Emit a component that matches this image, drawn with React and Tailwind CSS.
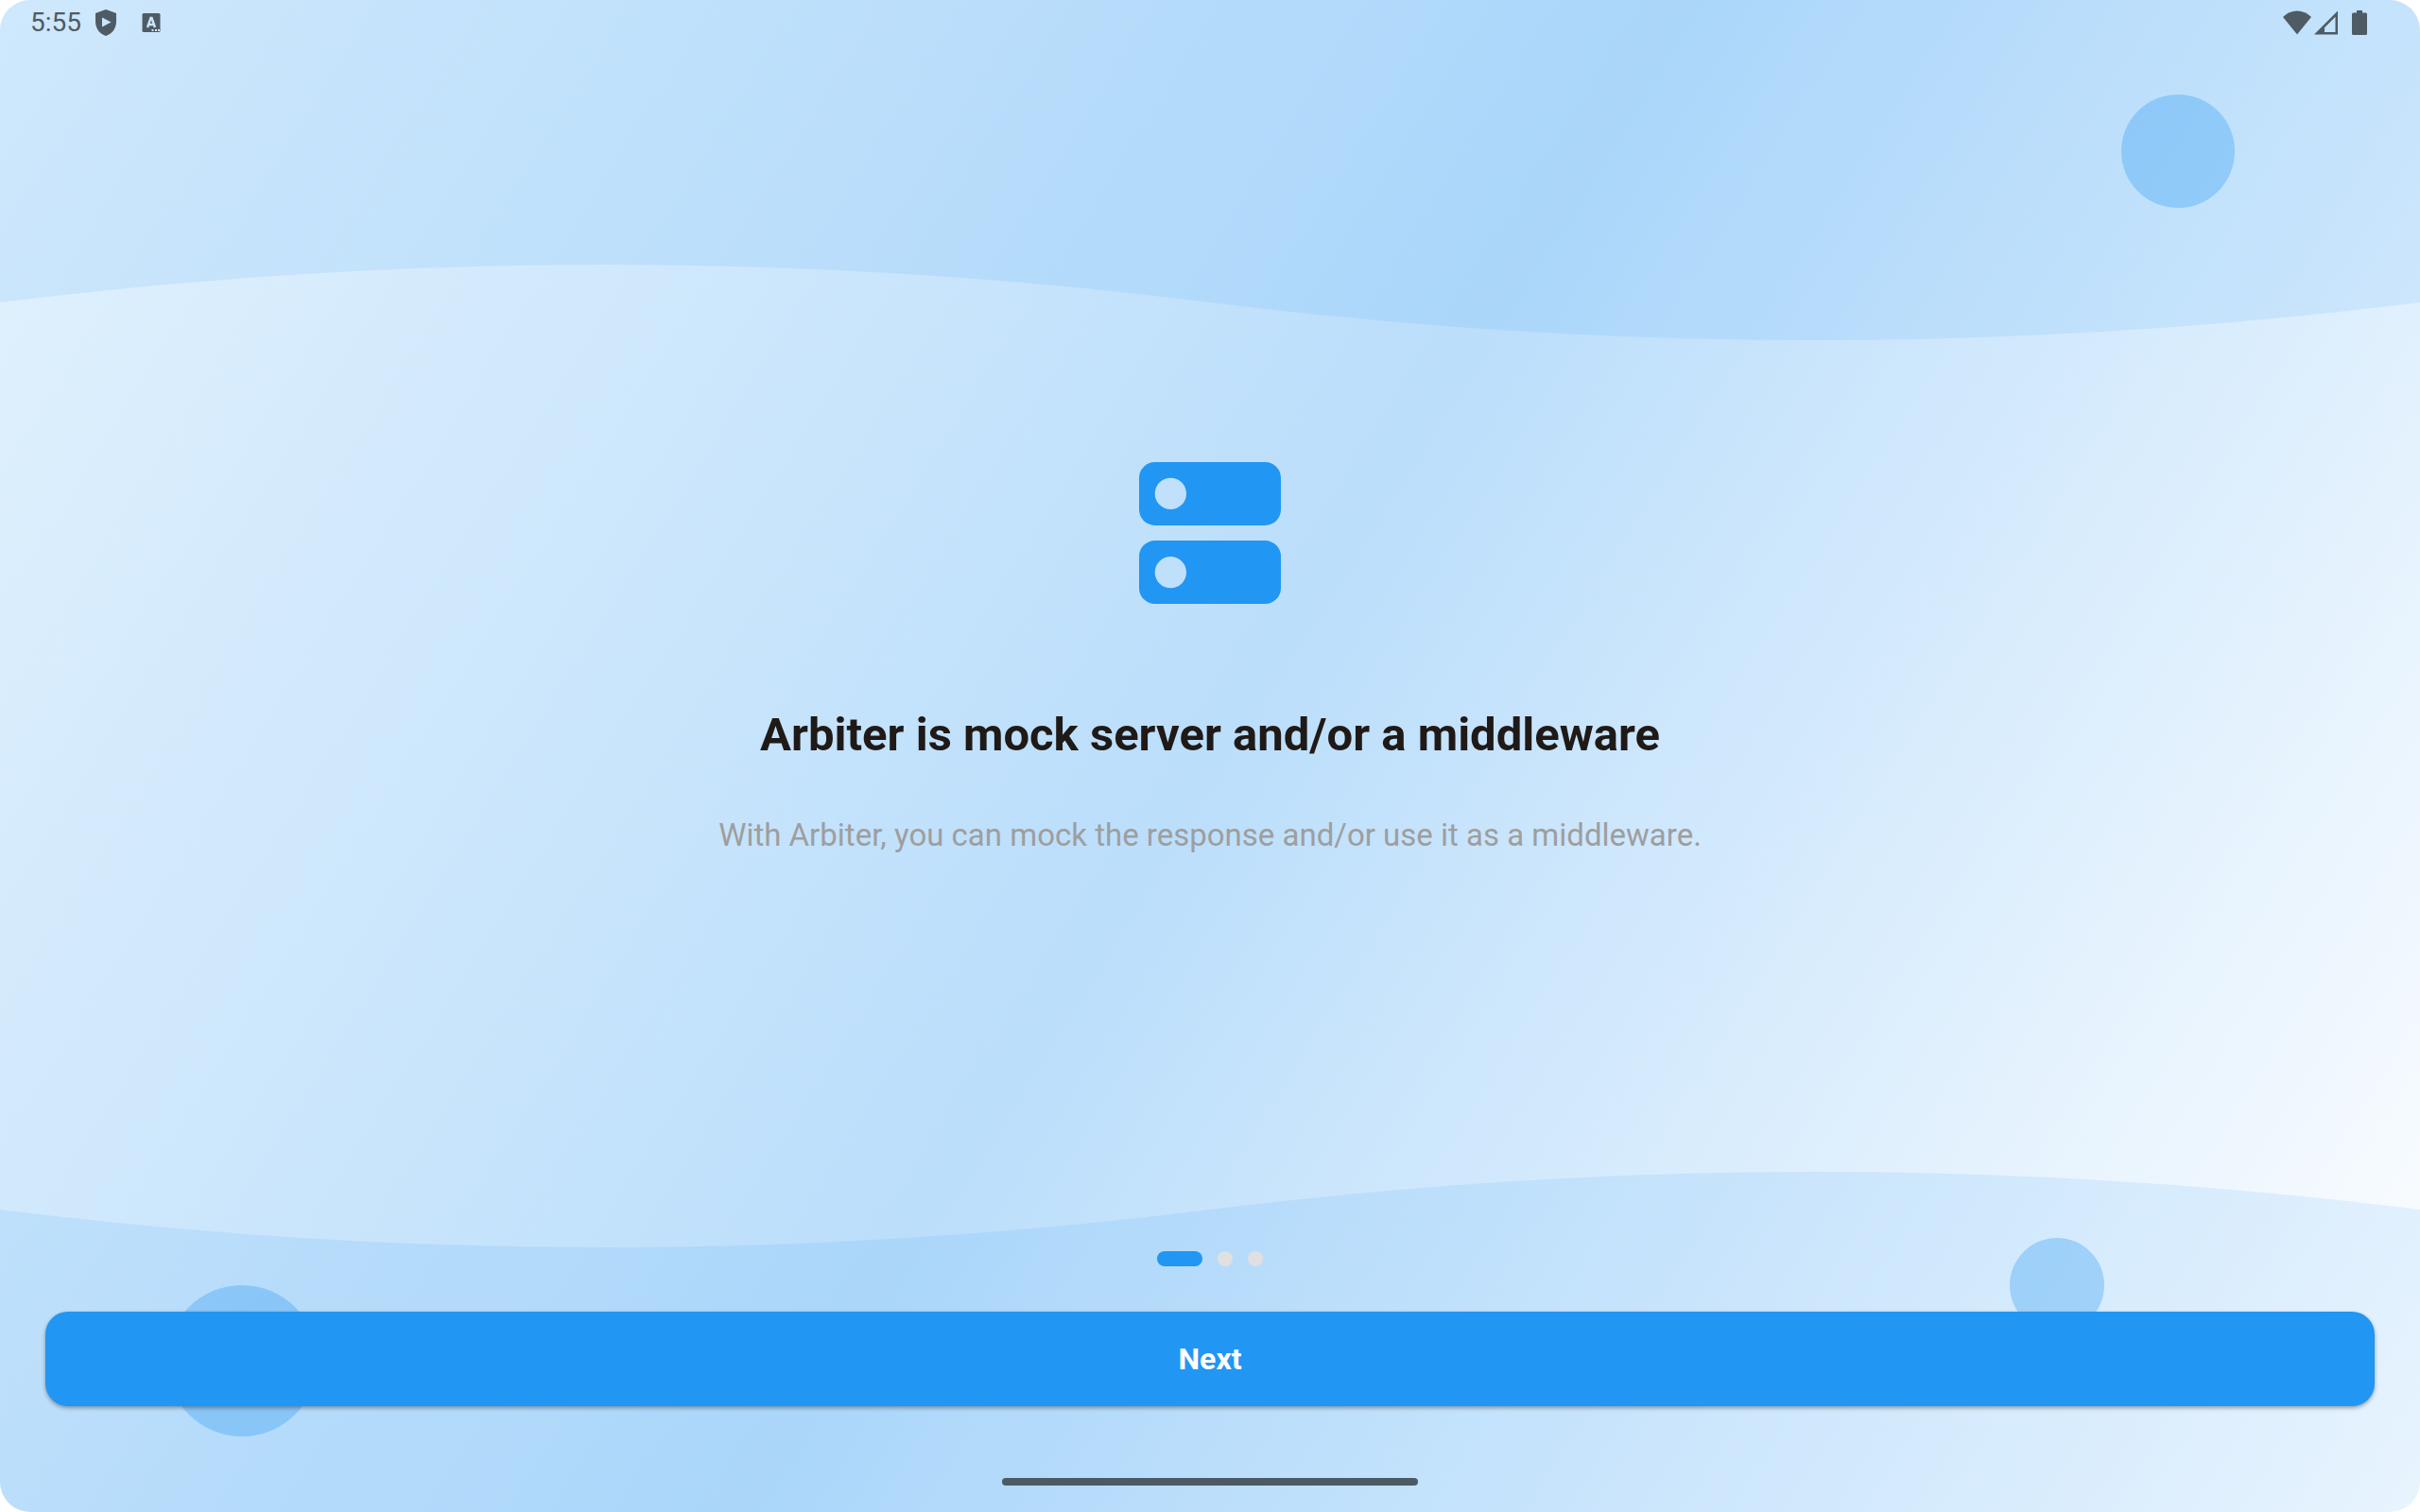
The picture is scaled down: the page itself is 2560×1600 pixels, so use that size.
import { useState } from 'react';

const pages = [
  { title: 'Arbiter is mock server and/or a middleware', text: 'With Arbiter, you can mock the response and/or use it as a middleware.' },
  { title: '', text: '' },
  { title: '', text: '' },
];

function Background() {
  return (
    <div className="absolute inset-0 -z-10 overflow-hidden bg-[linear-gradient(122deg,#e3f2fd_0%,#bbdefb_50%,#ffffff_100%)]" aria-hidden="true">
      <svg className="absolute inset-0 w-full h-full" viewBox="0 0 2560 1600" preserveAspectRatio="none" fill="#2196f3" fillOpacity="0.1">
        <path d="M0 0V320Q640 240 1280 320T2560 320V0Z" />
        <path d="M0 1600V1280Q640 1360 1280 1280T2560 1280V1600Z" />
      </svg>
      <div className="absolute left-[90%] top-[10%] size-30 -translate-1/2 rounded-full bg-[#2196f3]/30" />
      <div className="absolute left-[10%] top-[90%] size-40 -translate-1/2 rounded-full bg-[#2196f3]/30" />
      <div className="absolute left-[85%] top-[85%] size-25 -translate-1/2 rounded-full bg-[#2196f3]/30" />
    </div>
  );
}

function StatusBar() {
  return (
    <header className="flex items-center justify-between h-12 pl-8 pr-14 text-[#4f5b64]">
      <div className="flex items-center">
        <span className="text-[28px] leading-8">5:55</span>
        <svg className="ml-[14px] w-6 h-7" viewBox="0 0 24 28" fill="currentColor">
          <path fillRule="evenodd" d="M12 0L23 4V13C23 20 18.500 26 12 28C5.500 26 1 20 1 13V4ZM8 8.500V18.500L17.500 13.500Z" />
        </svg>
        <svg className="ml-6 w-6 h-5" viewBox="0 0 24 20">
          <rect x="2.500" width="19" height="20" rx="1.500" fill="currentColor" />
          <path d="M8 15L11.500 5H12.500L16 15M9.500 12H14.500" fill="none" stroke="#cbe6fc" strokeWidth="2.400" />
          <path d="M12.500 17h2v2h-2zM16 17h2v2h-2zM19 17h2v2h-2z" fill="#cbe6fc" />
        </svg>
      </div>
      <div className="flex items-center">
        <svg className="mr-0.5 w-8 h-[26px]" viewBox="0 0 32 26" fill="currentColor">
          <path d="M16 25.500L1 7Q7.500 0.500 16 0.500T31 7Z" />
        </svg>
        <svg className="w-7 h-[26px]" viewBox="0 0 28 26" fill="currentColor">
          <path fillRule="evenodd" d="M0 25.500L25 0.500V25.500ZM11 23H22.500V6.800L11 18.300Z" />
        </svg>
        <svg className="ml-3 w-4 h-[26px]" viewBox="0 0 16 26" fill="currentColor">
          <path d="M5 0H11V2.500H14.500Q16 2.500 16 4V24.500Q16 26 14.500 26H1.500Q0 26 0 24.500V4Q0 2.500 1.500 2.500H5Z" />
        </svg>
      </div>
    </header>
  );
}

function ServerIcon() {
  return (
    <svg className="size-50" viewBox="0 0 24 24" fill="#2196f3" aria-hidden="true">
      <path fillRule="evenodd" d="M5 3H19A2 2 0 0 1 21 5V9A2 2 0 0 1 19 11.030H5A2 2 0 0 1 3 9V5A2 2 0 0 1 5 3ZM7 5A2 2 0 1 0 7 9A2 2 0 1 0 7 5Z" />
      <path fillRule="evenodd" d="M5 12.970H19A2 2 0 0 1 21 15V19A2 2 0 0 1 19 21H5A2 2 0 0 1 3 19V15A2 2 0 0 1 5 12.970ZM7 15A2 2 0 1 0 7 19A2 2 0 1 0 7 15Z" />
    </svg>
  );
}

export default function App() {
  const [page, setPage] = useState(0);
  const next = () => setPage((p) => (p + 1) % pages.length);

  return (
    <div className="bg-white">
      <div className="relative isolate flex flex-col min-h-screen overflow-hidden rounded-[32px] font-[Roboto,sans-serif]">
        <Background />
        <StatusBar />
        <main className="flex flex-1 flex-col px-12">
          <section className="flex flex-1 flex-col items-center justify-center text-center">
            <ServerIcon />
            <h1 className="mt-[82px] text-[49px] leading-16 font-bold text-[#1f1a17]">{pages[page].title}</h1>
            <p className="mt-[50px] text-[33px] leading-12 text-[#9e9e9e]">{pages[page].text}</p>
          </section>
          <div className="flex justify-center gap-4">
            {pages.map((_, i) => (
              <span key={i} className={i === page ? 'h-4 w-12 rounded-full bg-[#2196f3]' : 'size-4 rounded-full bg-[#e0e0e0]'} />
            ))}
          </div>
          <button onClick={next} className="mt-12 h-25 w-full rounded-3xl bg-[#2196f3] text-[32px] font-bold text-white shadow-[0_2px_4px_rgba(0,0,0,0.35)]">Next</button>
        </main>
        <footer className="flex justify-center pt-19 pb-7">
          <div className="h-2 w-110 rounded-full bg-[#4b5a64]" />
        </footer>
      </div>
    </div>
  );
}
